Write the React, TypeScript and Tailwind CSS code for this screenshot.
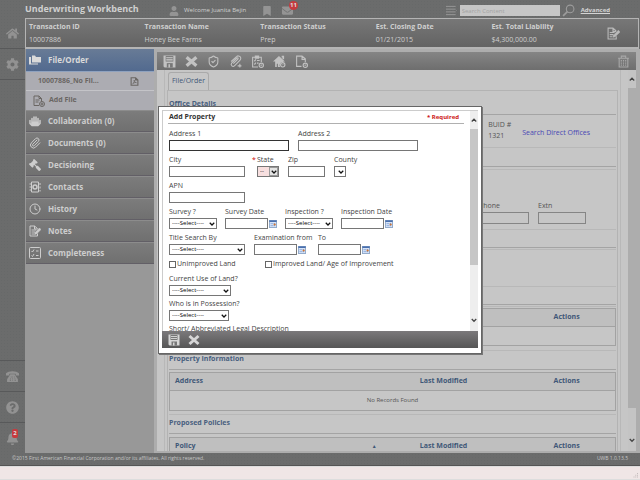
import type { ComponentType, ReactNode } from "react";
import { FaBell, FaBookmark, FaCog, FaEnvelope, FaGavel, FaHome, FaQuestionCircle, FaUser } from "react-icons/fa";
import { Clock, Paperclip, ShieldCheck } from "lucide-react";

type IconProps = { className?: string };
type Icon = ComponentType<IconProps>;

function Svg({ className, children }: { className?: string; children: ReactNode }) {
  return (
    <svg viewBox="0 0 24 24" className={className} fill="none" stroke="currentColor" strokeWidth="2" aria-hidden="true">
      {children}
    </svg>
  );
}

const Floppy: Icon = ({ className }) => (
  <Svg className={className}>
    <path d="M1 1h22v22H3l-2-2z" fill="currentColor" stroke="none" />
    <path d="M5 2h14v10H5z" fill="#777" stroke="none" />
    <path d="M6 5h12M6 9h12" stroke="#d0d0d0" />
    <path d="M7 15h11v8H7z" fill="#777" stroke="none" />
    <path d="M10 17h3v6h-3z" fill="currentColor" stroke="none" />
  </Svg>
);

const Cross: Icon = ({ className }) => (
  <Svg className={className}>
    <path d="M3 4l18 16M21 4L3 20" strokeWidth="6" />
  </Svg>
);

const Telephone: Icon = ({ className }) => (
  <Svg className={className}>
    <path d="M0 10V6c5-5 19-5 24 0v4h-6V7H6v3z" fill="currentColor" stroke="none" />
    <path d="M8 8h8l6 9v5H2v-5z" fill="currentColor" stroke="none" />
    <path d="M9 13h1m2 0h1m2 0h1M8 16h1m3 0h1m3 0h1M7 19h2m3 0h1m3 0h2" stroke="#6b6c6c" />
  </Svg>
);

const Folders: Icon = ({ className }) => (
  <Svg className={className}>
    <path d="M0 6v15h18v-2H4V6z" fill="currentColor" stroke="none" />
    <path d="M6 3h6l2 3h10v11H6z" fill="currentColor" stroke="none" />
  </Svg>
);

const Hands: Icon = ({ className }) => (
  <Svg className={className}>
    <path d="M2 11v6l4 4h12l4-4v-6M6 7v10M10 4v14M14 4v14M18 7v10" strokeWidth="3" strokeLinecap="round" />
    <path d="M5 13h14v7H5z" fill="currentColor" stroke="none" />
  </Svg>
);

const ContactBook: Icon = ({ className }) => (
  <Svg className={className}>
    <path d="M5 2h14v20H5zM22 4v4m0 3v4m0 3v3M1 6h4M1 12h4M1 18h4" />
    <circle cx="12" cy="12" r="4" strokeWidth="3" />
  </Svg>
);

const CheckList: Icon = ({ className }) => (
  <Svg className={className}>
    <rect x="1" y="1" width="22" height="22" rx="2" />
    <path d="M5 8l2 2 3-5M5 17l2 2 3-5M14 8h5M14 17h5" />
  </Svg>
);

const NotePen: Icon = ({ className }) => (
  <Svg className={className}>
    <path d="M17 17v5H2V2h9l6 5M11 2v6h6" />
    <path d="M5 10h9M5 14h7M5 18h5" />
    <path d="M21 6l3 3-9 9-4 1 1-4z" fill="currentColor" strokeWidth="1" />
  </Svg>
);

const HousePlus: Icon = ({ className }) => (
  <Svg className={className}>
    <path d="M0 12L11 2l11 10h-3v1a6 6 0 0 0-6 9H9v-6H7v6H4V12z" fill="currentColor" stroke="none" />
    <path d="M16 3h3v5" strokeWidth="3" />
    <circle cx="18" cy="18" r="4" />
    <path d="M16 18h4" strokeWidth="1" />
  </Svg>
);

const PageAdd: Icon = ({ className }) => (
  <Svg className={className}>
    <path d="M12 21H2V2h10l5 5v6M12 2v5h5M5 10h8M5 14h6" />
    <circle cx="18" cy="18" r="5" />
    <path d="M15 18h6M18 15v6" />
  </Svg>
);

const BlankPageAdd: Icon = ({ className }) => (
  <Svg className={className}>
    <path d="M12 21H3V2h10l6 5v6M13 2v6h6" />
    <circle cx="19" cy="19" r="4" />
    <path d="M17 19h4M19 17v4" strokeWidth="1" />
  </Svg>
);

const ClipboardAdd: Icon = ({ className }) => (
  <Svg className={className}>
    <path d="M13 22H3V4h16v9M8 2h6v4H8z" />
    <path d="M6 10l1 1 2-3M6 16l1 1 2-3M11 10h5M11 15h3" />
    <circle cx="19" cy="19" r="4" />
    <path d="M17 19h4M19 17v4" strokeWidth="1" />
  </Svg>
);

const ClipAdd: Icon = ({ className }) => (
  <Svg className={className}>
    <path d="M8 16l8-8c2-2 0-4-2-2l-9 9c-3 4 2 8 5 5L20 10c5-5-2-11-6-7L4 12" />
    <path d="M20 16v7M16 20h7" />
  </Svg>
);

const Bin: Icon = ({ className }) => (
  <Svg className={className}>
    <path d="M2 6h20M8 5V2h8v3M4 6v16h16V6" />
    <path d="M8 9v11M12 9v11M16 9v11" strokeDasharray="2 1" />
  </Svg>
);

const Magnifier: Icon = ({ className }) => (
  <Svg className={className}>
    <circle cx="15" cy="9" r="7" />
    <path d="M10 14l-8 8" strokeWidth="3" />
  </Svg>
);

const PdfPage: Icon = ({ className }) => (
  <Svg className={className}>
    <path d="M3 2h12l6 6v14H3zM15 2v6h6" strokeWidth="3" />
    <path d="M7 18c4-2 5-6 4-10 1 5 3 7 6 7-4-1-7 1-10 3z" />
  </Svg>
);

const railLine = "border-[#58595a]";

const sections: { label: string; icon: Icon }[] = [
  { label: "Collaboration (0)", icon: Hands },
  { label: "Documents (0)", icon: Paperclip },
  { label: "Decisioning", icon: ({ className }) => <FaGavel className={`${className} -scale-x-100`} /> },
  { label: "Contacts", icon: ContactBook },
  { label: "History", icon: Clock },
  { label: "Notes", icon: NotePen },
  { label: "Completeness", icon: CheckList },
];

const summary = [
  ["Transaction ID", "10007886"],
  ["Transaction Name", "Honey Bee Farms"],
  ["Transaction Status", "Prep"],
  ["Est. Closing Date", "01/21/2015"],
  ["Est. Total Liability", "$4,300,000.00"],
];

const tools: { label: string; icon: Icon }[] = [
  { label: "Save", icon: Floppy },
  { label: "Cancel", icon: Cross },
  { label: "Validate", icon: ShieldCheck },
  { label: "Attach", icon: ClipAdd },
  { label: "Add task", icon: ClipboardAdd },
  { label: "Add property", icon: HousePlus },
  { label: "Add policy", icon: BlankPageAdd },
];

function RailButton({ label, icon: I, className = "", children }: { label: string; icon: Icon; className?: string; children?: ReactNode }) {
  return (
    <button type="button" aria-label={label} className={`relative flex h-[31px] w-full shrink-0 items-center justify-center text-[#929292] ${railLine} ${className}`}>
      <I className="size-[13px]" />
      {children}
    </button>
  );
}

function Header() {
  return (
    <header className="flex h-[18px] shrink-0 items-center pr-[30px] pl-[25px]">
      <h1 className="w-[148px] text-[9px] leading-[16px] font-bold whitespace-nowrap text-[#d0d0d0]">Underwriting Workbench</h1>
      <div className="flex flex-1 items-center pt-[3px] text-[#949494]">
        <FaUser className="mr-[5px] -ml-1 size-[10px]" />
        <span className="w-[78px] text-[6px] whitespace-nowrap text-[#d0d0d0]">Welcome Juanita Bejin</span>
        <button type="button" aria-label="Bookmarks" className="mr-[10px]"><FaBookmark className="size-[10px]" /></button>
        <button type="button" aria-label="Messages" className="relative">
          <FaEnvelope className="size-[11px]" />
          <span className="absolute -top-1 left-[7px] flex size-[9px] items-center justify-center rounded-full bg-[#c63b3f] text-[6px] font-bold text-[#dedede]">11</span>
        </button>
      </div>
      <form className="flex items-center gap-[2px] pt-[3px]">
        <Svg className="h-[11px] w-[13px] text-[#999]"><path d="M0 3h21M0 9h21M0 15h21M0 21h21M23 12h1" /></Svg>
        <input type="search" aria-label="Search Content" placeholder="Search Content" className="h-[11px] w-[100px] bg-[#c6c6c6] px-[2px] text-[6px] placeholder:text-[#a2a2a2]" />
        <button type="button" aria-label="Search" className="mr-[4px] text-[#9c9c9c]"><Magnifier className="size-[13px]" /></button>
        <a href="#advanced" className="text-[6px] font-bold text-[#d4d4d4] underline">Advanced</a>
      </form>
    </header>
  );
}

function Summary() {
  return (
    <section className="mr-px flex h-[31px] shrink-0 border border-b-2 border-[#b4b4b4] bg-linear-to-b from-[#777] to-[#636363] pl-[3px]">
      <dl className="grid flex-1 grid-cols-5">
        {summary.map(([term, value]) => (
          <div key={term} className="pt-[1px]">
            <dt className="text-[7px] leading-[13px] font-bold whitespace-nowrap text-[#cfcfcf]">{term}</dt>
            <dd className="text-[7px] leading-[13px] text-[#cfcfcf]">{value}</dd>
          </div>
        ))}
      </dl>
      <button type="button" aria-label="Edit transaction" className="flex w-[31px] items-center text-[#bababa]"><NotePen className="size-[13px]" /></button>
    </section>
  );
}

function Sidebar() {
  return (
    <nav className="w-[129px] shrink-0 bg-[#989898] pl-px font-bold">
      <button type="button" className="flex h-[23px] w-full items-center border-b border-[#8fa2bf] bg-linear-to-b from-[#687b96] to-[#526a8f] pl-[3px] text-[8px] text-[#dadada]">
        <span className="w-[19px]"><Folders className="size-3" /></span>File/Order
      </button>
      <div className="flex h-[19px] items-center justify-between border-b border-[#c4c4c8] bg-[#acacb2] pr-[15px] pl-3 text-[7px] text-[#6a6663]">
        <a href="#file">10007886_No Fil...</a>
        <PdfPage className="size-[9px]" />
      </div>
      <button type="button" className="flex h-[19px] w-full items-center gap-1 bg-[#acacb2] pl-[7px] text-[7px] text-[#6a6663]">
        <PageAdd className="size-3" />Add File
      </button>
      {sections.map(({ label, icon: I }) => (
        <button key={label} type="button" className="flex h-[22px] w-full items-center border-t border-b border-t-[#8c8c8c] border-b-[#625f66] bg-linear-to-b from-[#7c7c7c] to-[#707070] pl-[3px] text-[8px] text-[#cdcdcd]">
          <span className="w-[19px]"><I className="size-[12px]" /></span>{label}
        </button>
      ))}
    </nav>
  );
}

function SectionTitle({ children, className = "" }: { children: ReactNode; className?: string }) {
  return <h2 className={`text-[7px] leading-[12px] font-bold text-[#49607f] ${className}`}>{children}</h2>;
}

function DataTable({ first, sorted, empty }: { first: string; sorted?: boolean; empty?: boolean }) {
  return (
    <table className="w-full table-fixed border-collapse border border-[#a2a2a2] text-[7px]">
      <thead>
        <tr className="h-[18px] border border-[#a2a2a2] bg-[#bfbfbf] text-left text-[#3f5878]">
          <th className="w-[55%] pl-[5px]">
            <div className="flex items-center justify-between pr-[38px]">{first}{sorted && <span className="ml-auto text-[5px]">▲</span>}</div>
          </th>
          <th className="w-[30%] pl-[5px]">Last Modified</th>
          <th className="pl-[5px]">Actions</th>
        </tr>
      </thead>
      {empty && (
        <tbody>
          <tr className="h-[20px]"><td colSpan={3} className="text-center text-[6px] text-[#555]">No Records Found</td></tr>
        </tbody>
      )}
    </table>
  );
}

function ContactsTable() {
  return (
    <table className="w-full table-fixed border-collapse border border-[#a2a2a2] text-[7px]">
      <thead>
        <tr className="h-[18px] border border-[#a2a2a2] bg-[#bfbfbf] text-left text-[#3f5878]">
          <th className="w-[85%] pr-[85px] text-right text-[5px]">▲</th>
          <th className="pl-[5px]">Actions</th>
        </tr>
      </thead>
      <tbody>
        <tr className="h-[19px]"><td colSpan={2} /></tr>
      </tbody>
    </table>
  );
}

function ScrollBar({ className, thumb }: { className: string; thumb: string }) {
  return (
    <div aria-hidden="true" className={`flex shrink-0 flex-col items-center text-[#444] ${className}`}>
      <Svg className="mt-px h-[17px] w-[6px] shrink-0"><path d="M3 16l9-9 9 9" strokeWidth="5" /></Svg>
      <div className={`w-full ${thumb}`} />
      <div className="flex-1" />
      <Svg className="h-[22px] w-[6px] shrink-0"><path d="M3 8l9 9 9-9" strokeWidth="5" /></Svg>
    </div>
  );
}

function Content() {
  return (
    <main className="flex min-w-0 flex-1 flex-col bg-[#adadad] pt-[3px] pr-1 pl-[3px]">
      <div className="flex h-[18px] shrink-0 items-center gap-[9px] bg-linear-to-b from-[#858585] to-[#6e6e6e] px-[6px] text-[#c2c2c2]">
        {tools.map(({ label, icon: I }) => (
          <button key={label} type="button" aria-label={label}><I className="size-[13px]" /></button>
        ))}
        <button type="button" aria-label="Delete" className="ml-auto text-[#a8a8a8]"><Bin className="size-[13px]" /></button>
      </div>
      <div className="flex min-h-0 flex-1 bg-[#c6c6c6]">
        <div className="ml-[7px] flex min-w-0 flex-1 flex-col overflow-hidden border-x border-[#b8b8b8] px-[2px]">
          <div className="flex shrink-0 pt-[2px]">
            <button type="button" className="ml-px h-[18px] rounded-t-[3px] border border-b-0 border-[#aaa] px-[3px] text-[7px] text-[#3f5878]">File/Order</button>
          </div>
          <div className="shrink-0 border border-[#b3b3b3] px-px">
            <SectionTitle className="pt-[7px] pb-[4px]">Office Details</SectionTitle>
            <div className="flex h-[34px] justify-end border-t border-b border-t-[#a4a4a4] border-b-[#b8b8b8] pt-[4px] text-[7px] text-[#555]">
              <div className="w-[34px] leading-[11px] whitespace-nowrap"><p>BUID #</p><p>1321</p></div>
              <a href="#offices" className="mt-[9px] mr-[26px] whitespace-nowrap text-[#4848b4]">Search Direct Offices</a>
            </div>
            <div className="h-[19px] border-b border-[#a4a4a4]" />
            <div className="mt-[2px] flex h-[61px] justify-end gap-[9px] border-t border-b border-t-[#b8b8b8] border-b-[#b8b8b8] pt-[30px] pr-[30px] text-[7px] leading-[12px] text-[#555]">
              <label className="w-[60px]"><span className="block pl-[10px]">Phone</span><input className="block h-3 w-full border border-[#858585]" /></label>
              <label className="w-12">Extn<input className="block h-3 w-full border border-[#858585]" /></label>
            </div>
            <div className="h-[18px] border-b border-[#a4a4a4]" />
            <div className="mt-px h-[38px] border-y border-[#b8b8b8]" />
            <div className="h-[18px] border-b border-[#a4a4a4]" />
            <div className="mt-px border-y border-[#b8b8b8] pt-px pb-1"><ContactsTable /></div>
            <SectionTitle className="pt-[2px] pb-[4px]">Property Information</SectionTitle>
            <div className="border-t border-b border-t-[#a4a4a4] border-b-[#b8b8b8] pt-[2px] pb-[3px]"><DataTable first="Address" empty /></div>
            <SectionTitle className="pt-[2px] pb-[4px]">Proposed Policies</SectionTitle>
            <div className="border-t border-[#a4a4a4] pt-[3px]"><DataTable first="Policy" sorted /></div>
          </div>
        </div>
        <div className="w-[7px]" />
        <ScrollBar className="w-[8px] bg-[#c4c4c4]" thumb="h-[84%] bg-[#adadad]" />
      </div>
      <div className="h-[2px] shrink-0" />
    </main>
  );
}

const control = "h-[11px] border text-black outline-none";

function Field({ label, id, width, required, date, focused }: { label: string; id: string; width: string; required?: boolean; date?: boolean; focused?: boolean }) {
  return (
    <div className="leading-[12px]">
      <label htmlFor={id} className="block whitespace-nowrap">{label}</label>
      <div className="flex gap-px">
        <input id={id} required={required} className={`${control} ${width} bg-white text-[7px] ${focused ? "border-[#333] px-px caret-black" : "border-[#767676]"}`} autoFocus={focused} />
        {date && (
          <button type="button" aria-label={`Pick ${label}`}>
            <Svg className="size-[8px]">
              <path d="M1 1h22v22H1z" fill="#d7e4f8" stroke="#5578a8" />
              <path d="M1 1h22v5H1z" fill="#496fae" stroke="none" />
              <path d="M5 11h14M5 17h14" stroke="#6f95d0" strokeWidth="3" strokeDasharray="3 2" />
              <path d="M14 11h6v5h-6z" fill="#d4742c" stroke="none" />
            </Svg>
          </button>
        )}
      </div>
    </div>
  );
}

function Choice({ label, id, width, option = "----Select----", required }: { label: string; id: string; width: string; option?: string; required?: boolean }) {
  return (
    <div className="relative leading-[12px]">
      {required && <span className="absolute -left-[5px] text-[#d00000]">*</span>}
      <label htmlFor={id} className="block whitespace-nowrap">{label}</label>
      <div className={`relative ${width}`}>
        <select id={id} required={required} className={`${control} block w-full appearance-none border-[#767676] pl-[2px] text-[6px] leading-[9px] ${required ? "bg-[#f7dfdf]" : "bg-white"}`}>
          <option>{option}</option>
        </select>
        <span className={`pointer-events-none absolute top-px right-px flex h-[9px] w-[9px] items-center justify-center ${required ? "border border-[#999] bg-[#e4e4e4]" : ""}`}>
          <Svg className="size-[6px] text-[#111]"><path d="M3 7l9 9 9-9" strokeWidth="5" /></Svg>
        </span>
      </div>
    </div>
  );
}

function Check({ label, className = "" }: { label: string; className?: string }) {
  return (
    <label className={`flex items-center gap-px whitespace-nowrap ${className}`}>
      <input type="checkbox" className="size-[7px] appearance-none border border-[#666] bg-white" />
      {label}
    </label>
  );
}

function AddProperty() {
  return (
    <div className="pointer-events-none absolute inset-x-0 top-[106px] flex justify-center">
      <div role="dialog" aria-label="Add Property" className="pointer-events-auto flex h-[248px] w-[324px] flex-col border border-[#666] bg-white px-[3px] pt-[3px] pb-[5px] shadow-[1px_1px_0_#777]">
        <div className="flex min-h-0 flex-1 border-t border-l border-[#ccc]">
          <form className="min-w-0 flex-1 overflow-hidden pr-[6px] pl-[5px] text-[7px] text-[#444]">
            <div className="flex h-[13px] items-center justify-between border-b border-[#b0b0b0] pr-[5px] pl-px font-bold">
              <h2 className="text-[#333]">Add Property</h2>
              <span className="text-[6px] text-[#cc1414]">* Required</span>
            </div>
            <div className="flex flex-col gap-[3px] pt-[4px] pl-px">
              <div className="flex gap-[9px]">
                <Field label="Address 1" id="a1" width="w-[120px]" focused />
                <Field label="Address 2" id="a2" width="w-[120px]" />
              </div>
              <div className="flex gap-[9px]">
                <Field label="City" id="city" width="w-[76px]" />
                <div className="pl-[3px]"><Choice label="State" id="state" width="w-[22px]" option="--" required /></div>
                <Field label="Zip" id="zip" width="w-[37px]" />
                <Choice label="County" id="county" width="w-[12px]" option="" />
              </div>
              <Field label="APN" id="apn" width="w-[76px]" />
              <div className="flex gap-[8px]">
                <Choice label="Survey ?" id="survey" width="w-12" />
                <Field label="Survey Date" id="sdate" width="w-[43px]" date />
                <Choice label="Inspection ?" id="insp" width="w-12" />
                <Field label="Inspection Date" id="idate" width="w-[43px]" date />
              </div>
              <div className="flex gap-[9px]">
                <Choice label="Title Search By" id="title" width="w-[76px]" />
                <div className="w-[55px]"><Field label="Examination from" id="exam" width="w-[43px]" date /></div>
                <Field label="To" id="to" width="w-[43px]" date />
              </div>
              <div className="flex h-[12px]">
                <Check label="Unimproved Land" className="w-24" />
                <Check label="Improved Land/ Age of Improvement" />
              </div>
              <div className="flex flex-col gap-[2px]">
                <Choice label="Current Use of Land?" id="use" width="w-[62px]" />
                <Choice label="Who is in Possession?" id="who" width="w-[60px]" />
                <Field label="Short/ Abbreviated Legal Description" id="legal" width="w-[200px]" />
              </div>
            </div>
          </form>
          <ScrollBar className="w-[8px] bg-[#eeeeee]" thumb="h-[136px] bg-[#c6c6c6]" />
        </div>
        <div className="flex h-[17px] shrink-0 items-center gap-[8px] bg-linear-to-b from-[#7b797b] to-[#565656] pl-[6px] text-[#d6d6d6]">
          <button type="button" aria-label="Save property"><Floppy className="size-3" /></button>
          <button type="button" aria-label="Close"><Cross className="size-3" /></button>
        </div>
      </div>
    </div>
  );
}

export default function App() {
  return (
    <div className="relative flex h-screen flex-col overflow-hidden bg-[#6b6c6c] bg-[radial-gradient(#676969_1px,transparent_1px)] bg-[length:3px_3px] font-['Open_Sans','Noto_Sans',sans-serif]">
      <Header />
      <div className="flex min-h-0 flex-1">
        <aside className="flex w-[25px] shrink-0 flex-col">
          <RailButton label="Home" icon={FaHome} className="border-b" />
          <RailButton label="Settings" icon={FaCog} className="border-b" />
          <div className="flex-1" />
          <RailButton label="Phone" icon={Telephone} className="border-t" />
          <RailButton label="Help" icon={FaQuestionCircle} className="border-t" />
          <RailButton label="Alerts" icon={FaBell} className="border-t">
            <span className="absolute top-[6px] left-[12px] flex h-[9px] w-[6px] items-center justify-center rounded-[2px] bg-[#c63b3f] text-[6px] font-bold text-[#dedede]">2</span>
          </RailButton>
        </aside>
        <div className="flex min-w-0 flex-1 flex-col">
          <Summary />
          <div className="flex min-h-0 flex-1">
            <Sidebar />
            <Content />
          </div>
        </div>
      </div>
      <footer className="flex h-[13px] shrink-0 items-center justify-between border-b border-[#555] pr-3 pl-3 text-[5px] text-[#c8c8c8]">
        <span>©2015 First American Financial Corporation and/or its affiliates. All rights reserved.</span>
        <span>UWB 1.0.13.5</span>
      </footer>
      <div className="flex h-[14px] shrink-0 items-end justify-end border-y border-[#ddd] bg-[#f0e6e6] p-px text-[#c4bcbc]">
        <Svg className="size-[6px]"><path d="M2 20h4m3 0h4m3 0h4M9 13h4m3 0h4M16 6h4" strokeWidth="4" /></Svg>
      </div>
      <AddProperty />
    </div>
  );
}
